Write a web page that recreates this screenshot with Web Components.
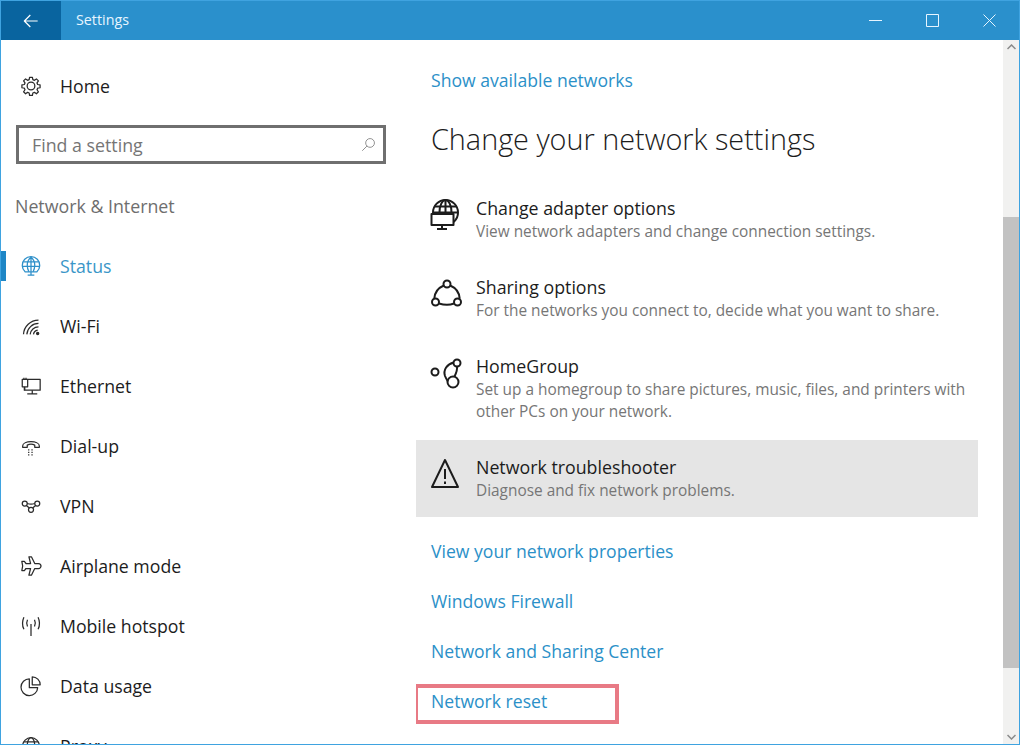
<!DOCTYPE html>
<html lang="en">
<head>
<meta charset="utf-8">
<title>Settings</title>
<style>
	html, body { margin: 0; padding: 0; height: 100%; background: #fff; overflow: hidden; }
	body { font-family: "Open Sans", "Noto Sans", sans-serif; color: #1c1c1c; }
</style>
</head>
<body>
<settings-window>
	<title-bar slot="top" label="Settings"></title-bar>

	<nav-pane slot="nav">
		<nav-item icon="gear" style="--row-height: 30px">Home</nav-item>
		<search-box placeholder="Find a setting"></search-box>
		<div class="section">Network &amp; Internet</div>
		<nav-item icon="status" active>Status</nav-item>
		<nav-item icon="wifi">Wi-Fi</nav-item>
		<nav-item icon="ethernet">Ethernet</nav-item>
		<nav-item icon="dialup">Dial-up</nav-item>
		<nav-item icon="vpn">VPN</nav-item>
		<nav-item icon="plane">Airplane mode</nav-item>
		<nav-item icon="hotspot">Mobile hotspot</nav-item>
		<nav-item icon="pie">Data usage</nav-item>
		<nav-item icon="globe">Proxy</nav-item>
	</nav-pane>

	<content-pane slot="main">
		<link-row>Show available networks</link-row>
		<page-heading>Change your network settings</page-heading>
		<option-row icon="adapter" label="Change adapter options">View network adapters and change connection settings.</option-row>
		<option-row icon="sharing" label="Sharing options">For the networks you connect to, decide what you want to share.</option-row>
		<option-row icon="homegroup" label="HomeGroup">Set up a homegroup to share pictures, music, files, and printers with<br>other PCs on your network.</option-row>
		<option-row icon="warning" label="Network troubleshooter" hovered>Diagnose and fix network problems.</option-row>
		<link-row style="margin-top: 9px">View your network properties</link-row>
		<link-row>Windows Firewall</link-row>
		<link-row>Network and Sharing Center</link-row>
		<link-row marked>Network reset</link-row>
	</content-pane>

	<win-scrollbar slot="bar"></win-scrollbar>
</settings-window>

<script>
// all the glyphs live here, stroked with currentColor
const ICONS = {
	gear: `<path d="M10.3 1.5h3.4l.5 2.9 1.9.8 2.4-1.7 2.4 2.4-1.7 2.4.8 1.9 2.9.5v3.4l-2.9.5-.8 1.9 1.7 2.4-2.4 2.4-2.4-1.7-1.900.8-.5 2.900h-3.400l-.5-2.900-1.900-.8-2.400 1.700-2.400-2.400 1.700-2.400-.8-1.900-2.900-.5v-3.400l2.900-.5.8-1.900-1.700-2.400 2.400-2.400 2.400 1.700 1.900-.8z"/><circle cx="12" cy="12" r="4.600"/>`,
	status: `<path d="M5 19a10.500 10.500 0 1 1 14 0"/><path d="M12 1.500C8.500 4.500 7.500 8 7.500 11c0 3 1 6 2 8M12 1.500c3.500 3 4.500 6.500 4.500 9.500 0 3-1 6-2 8M12 1.500V19M3 7h18M1.500 12.500h21"/><path d="M4.500 19h15M8 23h8M12 19v4"/>`,
	wifi: `<path d="M3 22a18 18 0 0 1 18-17M7 22a14 14 0 0 1 14-13M11 22a10 10 0 0 1 10-9M15 22a6 6 0 0 1 5-5"/><circle cx="20" cy="21" r="1.300" fill="currentColor"/>`,
	ethernet: `<path d="M8 4h15v13H4v-4"/><path d="M1.500 4h6.500v9H1.500zM3.500 2v2M6 2v2M4.500 13v4M13.500 17v4M7.500 21.500h12"/>`,
	dialup: `<path d="M2 12C2 5 22 5 22 12v1.500h-5.500V11c-3-1.500-6-1.500-9 0v2.500H2z"/><path stroke-dasharray="1.500 2.500" d="M8.500 16.500h8M8.500 19.500h8M8.500 22.500h8"/>`,
	vpn: `<circle cx="4.500" cy="9" r="3"/><circle cx="19.500" cy="9" r="3"/><circle cx="12" cy="16.500" r="3"/><path d="M7.500 9c3 1 6 1 9 0M6.500 11.500l3.500 3M17.500 11.500l-3.500 3"/>`,
	plane: `<path d="M9.500 1h3l4 8h4.500c2 0 3 2 3 3s-1 3-3 3h-4.500l-4 8h-3l2-8H6l-2 2.500H1l1-5.500-1-5.500h3L6 9h5.500z"/>`,
	hotspot: `<path d="M12 9.500V24M7.800 4.500c-1.500 3-1.500 5 0 8M16.200 4.500c1.500 3 1.500 5 0 8M3.500 1.500C1 7 1 11 3.500 16M20.500 1.500c2.500 5.500 2.500 9.500 0 14.500"/>`,
	pie: `<path d="M10 3.500a10 10 0 1 0 10 10.500H10z"/><path d="M13.500 1a9.500 9.500 0 0 1 9.500 9.500h-9.500z"/>`,
	globe: `<circle cx="12" cy="12" r="10"/><ellipse cx="12" cy="12" rx="4.500" ry="10"/><path d="M2 12h20M3.500 7h17M3.500 17h17"/>`,
	adapter: `<circle cx="14.500" cy="14.500" r="12.500"/><ellipse cx="14.500" cy="14.500" rx="6" ry="12.500"/><path d="M14.500 2v25M4 8.500h21M2 14.500h25"/><path fill="#fff" d="M.5 16h22v11H.5z"/><path d="M6 31h10M11 27v4"/>`,
	sharing: `<circle cx="16" cy="7" r="3.500"/><circle cx="4.500" cy="25" r="3.500"/><circle cx="26.500" cy="25" r="3.500"/><path d="M12.800 8.500C7 11 3.700 15.500 3.300 21.600M19.200 8.500c5.800 2.500 9.100 7 9.500 13.100M8 26.500c5 1.500 11 1.500 15 0"/>`,
	homegroup: `<circle cx="4" cy="16" r="3.500"/><circle cx="26" cy="7" r="3.500"/><circle cx="22" cy="26" r="5.500"/><path d="M22.800 6.500C16 8 12 14 14 20c1 2.500 2 4 3 5.500M26 10.500c.500 3-.5 6-2.500 10"/>`,
	warning: `<path d="M14 3 1 30h26z"/><path d="M14 12v10M14 24.500v2.500"/>`,
	back: `<path d="M3 12h19M11 3l-9 9 9 9"/>`,
	search: `<circle cx="14.500" cy="9.500" r="7"/><path d="M9.500 14.500 2 22"/>`
};

function svgIcon(name, size, box = 24, width = 1.6) {
	return `<svg width="${size}" height="${size}" viewBox="0 0 ${box} ${box}" fill="none" stroke="currentColor" stroke-width="${width}" stroke-linejoin="round" style="overflow: visible" aria-hidden="true">${ICONS[name]}</svg>`;
}

class SettingsWindow extends HTMLElement {
	constructor() {
		super();
		this.attachShadow({ mode: 'open' });
		this.shadowRoot.innerHTML = `
			<style>
				:host {
					display: flex;
					flex-direction: column;
					box-sizing: border-box;
					width: 1020px;
					height: 745px;
					border: 1px solid #3fa3e0;
					border-top: 0;
					overflow: hidden;
					background: #fff;
				}
				.body { flex: 1; min-height: 0; display: flex; }
				.nav { flex: 0 0 415px; display: block; }
				.main { flex: 1; min-width: 0; }
			</style>
			<slot name="top"></slot>
			<div class="body">
				<div class="nav"><slot name="nav"></slot></div>
				<div class="main"><slot name="main"></slot></div>
				<slot name="bar"></slot>
			</div>
		`;
	}
}

class TitleBar extends HTMLElement {
	constructor() {
		super();
		this.attachShadow({ mode: 'open' });
		this.shadowRoot.innerHTML = `
			<style>
				:host {
					display: flex;
					align-items: center;
					height: 40px;
					flex: none;
					background: #2a90cc;
					border-top: 1px solid #3fa3e0;
					box-sizing: border-box;
					color: #e6f5ff;
				}
				.back {
					display: flex;
					align-items: center;
					justify-content: center;
					align-self: stretch;
					width: 60px;
					background: #09649f;
					color: #fff;
				}
				.label { flex: 1; padding: 0 0 2px 15px; font-size: 14.3px; }
				.btn { width: 57px; display: flex; justify-content: center; }
				.btn svg { display: block; }
				.btn:last-child { margin-right: 1px; }
			</style>
			<div class="back">${svgIcon('back', 16, 24, 1.8)}</div>
			<div class="label">${this.getAttribute('label')}</div>
			<div class="btn"><svg width="13" height="13" viewBox="0 0 13 13" stroke="currentColor" fill="none"><path d="M0 6.500h13"/></svg></div>
			<div class="btn"><svg width="13" height="13" viewBox="0 0 13 13" stroke="currentColor" fill="none"><path d="M.5.500h12v12H.5z"/></svg></div>
			<div class="btn"><svg width="13" height="13" viewBox="0 0 13 13" stroke="currentColor" fill="none"><path d="M.5.500l12 12M12.500.500l-12 12"/></svg></div>
		`;
	}
}

class NavPane extends HTMLElement {
	constructor() {
		super();
		this.attachShadow({ mode: 'open' });
		this.shadowRoot.innerHTML = `
			<style>
				:host { display: block; padding-top: 31px; height: 704px; overflow: hidden; box-sizing: border-box; }
				::slotted(.section) {
					margin: 31px 0 19px 14px;
					height: 22px;
					line-height: 22px;
					font-size: 17.8px;
					color: #6e6e6e;
				}
			</style>
			<slot></slot>
		`;
	}
}

class NavItem extends HTMLElement {
	constructor() {
		super();
		this.attachShadow({ mode: 'open' });
		const active = this.hasAttribute('active');
		this.shadowRoot.innerHTML = `
			<style>
				:host {
					display: flex;
					align-items: center;
					height: var(--row-height, 60px);
					position: relative;
					font-size: 17.7px;
					color: ${active ? '#3a96c8' : '#1c1c1c'};
				}
				.icon { width: 59px; display: flex; justify-content: center; color: ${active ? '#2d8fc9' : '#2b2b2b'}; }
				.mark { position: absolute; left: 0; top: 15px; width: 5px; height: 30px; background: #1e86c6; }
			</style>
			${active ? '<div class="mark"></div>' : ''}
			<div class="icon">${svgIcon(this.getAttribute('icon'), 20, 24, 1.5)}</div>
			<slot></slot>
		`;
	}
}

class SearchBox extends HTMLElement {
	constructor() {
		super();
		this.attachShadow({ mode: 'open' });
		this.shadowRoot.innerHTML = `
			<style>
				:host {
					display: flex;
					align-items: center;
					box-sizing: border-box;
					width: 370px;
					height: 39px;
					margin: 24px 0 0 15px;
					padding: 0 7px 0 13px;
					border: 3px solid #6f6f6f;
					font-size: 17.8px;
					color: #757575;
				}
				span { flex: 1; }
				svg { display: block; color: #8a8a8a; }
			</style>
			<span>${this.getAttribute('placeholder')}</span>
			${svgIcon('search', 15, 24, 1.5)}
		`;
	}
}

class ContentPane extends HTMLElement {
	constructor() {
		super();
		this.attachShadow({ mode: 'open' });
		this.shadowRoot.innerHTML = `
			<style>
				:host { display: block; padding-top: 15px; height: 704px; box-sizing: border-box; overflow: hidden; }
			</style>
			<slot></slot>
		`;
	}
}

class PageHeading extends HTMLElement {
	constructor() {
		super();
		this.attachShadow({ mode: 'open' });
		this.shadowRoot.innerHTML = `
			<style>
				:host {
					display: block;
					margin: 14px 0 22px 15px;
					height: 40px;
					line-height: 40px;
					font-size: 28.8px;
					font-weight: 300;
					color: #1c1c1c;
				}
			</style>
			<slot></slot>
		`;
	}
}

class OptionRow extends HTMLElement {
	constructor() {
		super();
		this.attachShadow({ mode: 'open' });
		const hovered = this.hasAttribute('hovered');
		this.shadowRoot.innerHTML = `
			<style>
				:host {
					display: flex;
					box-sizing: border-box;
					width: 562px;
					padding: 14px 0 ${hovered ? '15px' : '17px'} 0;
					background: ${hovered ? '#e5e5e5' : 'transparent'};
				}
				.icon { flex: 0 0 60px; display: flex; justify-content: center; padding-top: 3px; color: #1c1c1c; }
				.icon svg { display: block; }
				.label { font-size: 17.8px; line-height: 26px; color: #1c1c1c; }
				.sub { font-size: 15.4px; line-height: 22px; color: #767676; }
			</style>
			<div class="icon">${svgIcon(this.getAttribute('icon'), 30, 30, 2)}</div>
			<div>
				<div class="label">${this.getAttribute('label')}</div>
				<div class="sub"><slot></slot></div>
			</div>
		`;
	}
}

class LinkRow extends HTMLElement {
	constructor() {
		super();
		this.attachShadow({ mode: 'open' });
		const marked = this.hasAttribute('marked');
		this.shadowRoot.innerHTML = `
			<style>
				:host {
					display: block;
					width: max-content;
					height: ${marked ? '40px' : '50px'};
					line-height: ${marked ? '26px' : '50px'};
					font-size: 17.6px;
					color: #2b90c8;
					box-sizing: border-box;
					${marked
						? 'margin: 8px 0 0 -2px; padding: 0 68px 0 13px; border: 4px solid #e87a85;'
						: 'margin-left: 15px;'}
				}
			</style>
			<slot></slot>
		`;
	}
}

class WinScrollbar extends HTMLElement {
	constructor() {
		super();
		this.attachShadow({ mode: 'open' });
		this.shadowRoot.innerHTML = `
			<style>
				:host {
					flex: 0 0 16px;
					display: flex;
					flex-direction: column;
					background: #f1f1f0;
					color: #8a8a8a;
				}
				.arrow { height: 14px; display: flex; align-items: center; justify-content: center; }
				.gap-top { height: 163px; }
				.thumb { height: 451px; background: #c2c2c2; }
				.gap { flex: 1; }
			</style>
			<div class="arrow"><svg width="9" height="6" viewBox="0 0 9 6" fill="none" stroke="currentColor" stroke-width="1.5"><path d="M.5 5 4.500 1l4 4"/></svg></div>
			<div class="gap-top"></div>
			<div class="thumb"></div>
			<div class="gap"></div>
			<div class="arrow"><svg width="9" height="6" viewBox="0 0 9 6" fill="none" stroke="currentColor" stroke-width="1.5"><path d="M.5 1l4 4 4-4"/></svg></div>
		`;
	}
}

customElements.define('settings-window', SettingsWindow);
customElements.define('title-bar', TitleBar);
customElements.define('nav-pane', NavPane);
customElements.define('nav-item', NavItem);
customElements.define('search-box', SearchBox);
customElements.define('content-pane', ContentPane);
customElements.define('page-heading', PageHeading);
customElements.define('option-row', OptionRow);
customElements.define('link-row', LinkRow);
customElements.define('win-scrollbar', WinScrollbar);
</script>
</body>
</html>
